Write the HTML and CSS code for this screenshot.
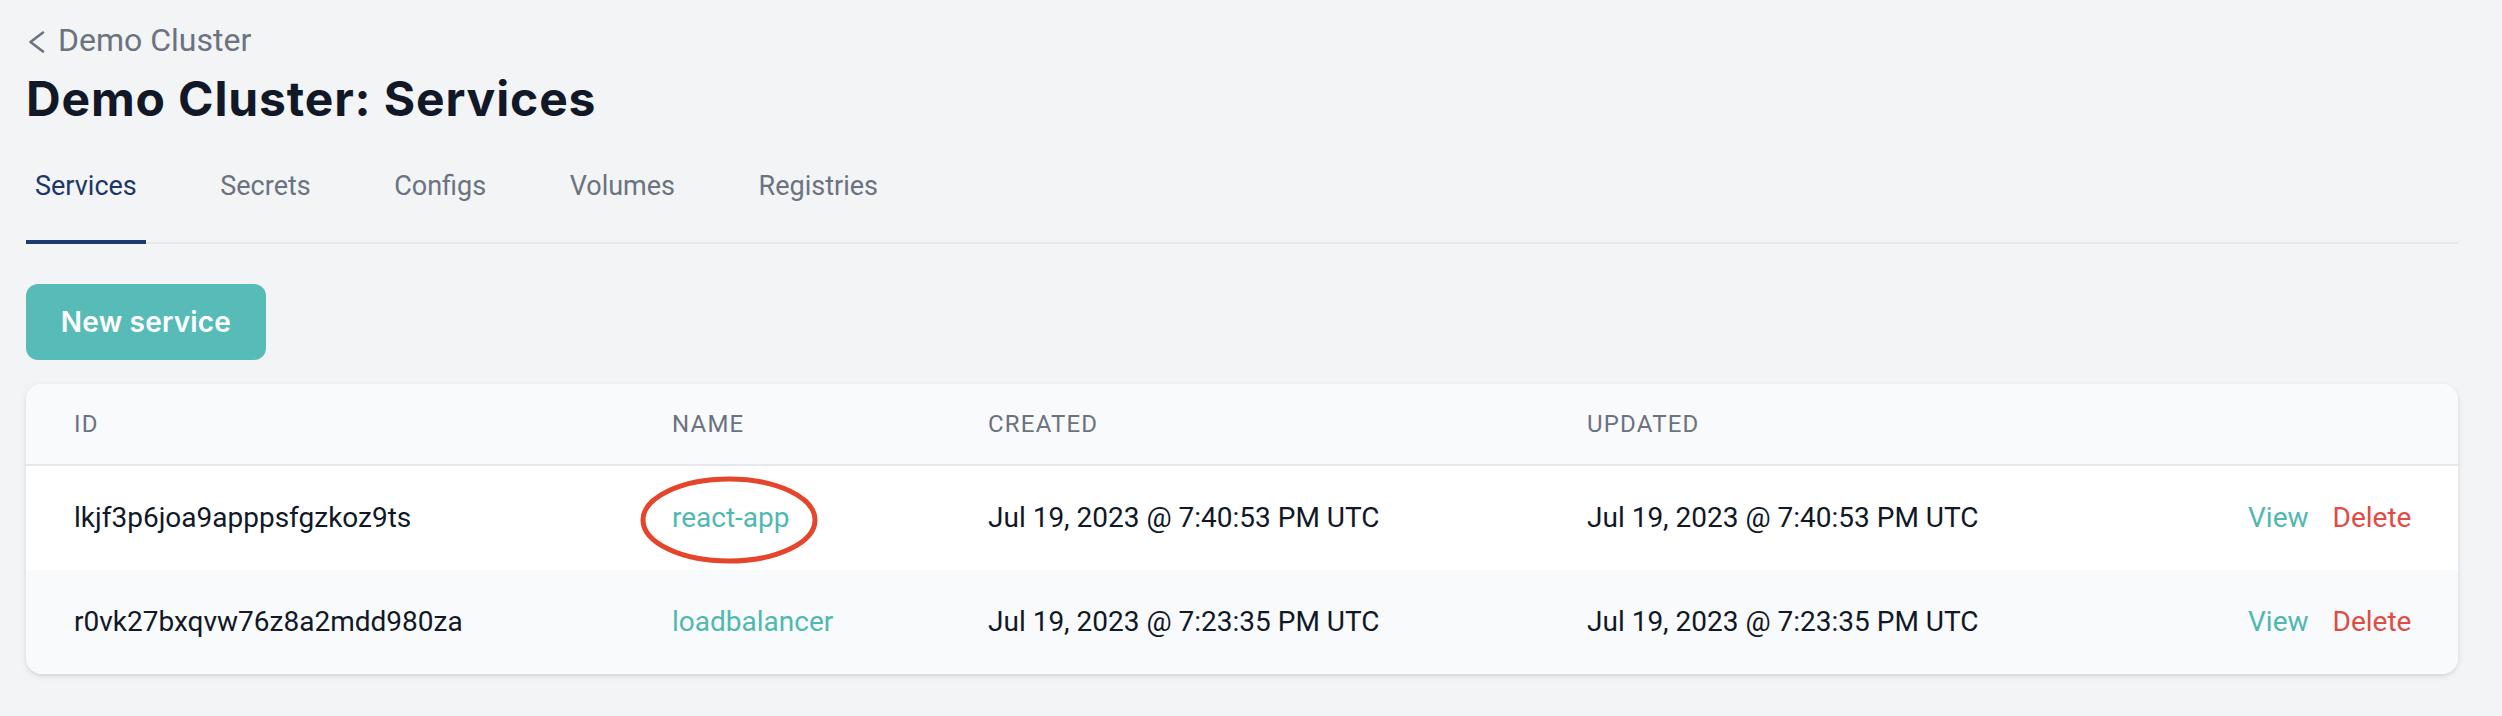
FILE: index.html
```html
<!DOCTYPE html>
<html lang="en">
<head>
<meta charset="utf-8">
<title>Demo Cluster: Services</title>
<link rel="stylesheet" href="styles.css">
</head>
<body>
<div class="page">
  <a class="back" href="#">
    <svg class="back-icon" viewBox="0 0 20 24" width="20" height="24" aria-hidden="true">
      <polyline points="17,2.5 4.5,12 17,21.5" fill="none" stroke="currentColor" stroke-width="2.6" stroke-linecap="round" stroke-linejoin="round"/>
    </svg>
    <span>Demo Cluster</span>
  </a>
  <h1 class="title">Demo Cluster: Services</h1>

  <nav class="tabs">
    <a class="tab active" href="#">Services</a>
    <a class="tab" href="#">Secrets</a>
    <a class="tab" href="#">Configs</a>
    <a class="tab" href="#">Volumes</a>
    <a class="tab" href="#">Registries</a>
  </nav>

  <button class="btn-new" type="button">New service</button>

  <div class="card">
    <div class="row head">
      <div class="cell">ID</div>
      <div class="cell">Name</div>
      <div class="cell">Created</div>
      <div class="cell">Updated</div>
      <div class="cell"></div>
    </div>
    <div class="row odd">
      <div class="cell">lkjf3p6joa9apppsfgzkoz9ts</div>
      <div class="cell"><span class="circled"><a class="link" href="#">react-app</a><svg class="mark" viewBox="0 0 180 88" aria-hidden="true"><ellipse cx="90" cy="44" rx="86" ry="41" fill="none" stroke="#e5452b" stroke-width="5"/></svg></span></div>
      <div class="cell">Jul 19, 2023 @ 7:40:53 PM UTC</div>
      <div class="cell">Jul 19, 2023 @ 7:40:53 PM UTC</div>
      <div class="cell actions"><a class="link" href="#">View</a><a class="danger" href="#">Delete</a></div>
    </div>
    <div class="row even">
      <div class="cell">r0vk27bxqvw76z8a2mdd980za</div>
      <div class="cell"><a class="link" href="#">loadbalancer</a></div>
      <div class="cell">Jul 19, 2023 @ 7:23:35 PM UTC</div>
      <div class="cell">Jul 19, 2023 @ 7:23:35 PM UTC</div>
      <div class="cell actions"><a class="link" href="#">View</a><a class="danger" href="#">Delete</a></div>
    </div>
  </div>
</div>
</body>
</html>
```

FILE: styles.css
```css
* { box-sizing: border-box; }

html, body {
  margin: 0;
  background: #f3f4f6;
}

body {
  font-family: Roboto, "Liberation Sans", sans-serif;
  color: #111827;
  width: 2502px;
  height: 716px;
  overflow: hidden;
}

a { text-decoration: none; }

.page {
  padding: 16px 44px 0 26px;
}

.back {
  display: flex;
  align-items: center;
  height: 48px;
  color: #6b7280;
  font-size: 32px;
  line-height: 48px;
}

.back-icon {
  width: 20px;
  height: 24px;
  margin-right: 12px;
  margin-top: 4px;
}

.title {
  margin: 3px 0 0 0;
  font-family: Inter, "Noto Sans", sans-serif;
  font-weight: 700;
  font-size: 48px;
  line-height: 64px;
  letter-spacing: 0.85px;
  color: #111827;
}

.tabs {
  display: flex;
  gap: 65.5px;
  margin-top: 3px;
  border-bottom: 2px solid #e5e7eb;
}

.tab {
  display: block;
  padding: 32px 9px 34px;
  margin-bottom: -2px;
  border-bottom: 4px solid transparent;
  font-size: 27px;
  line-height: 40px;
  color: #6b7280;
}

.tab.active {
  color: #1c3767;
  border-bottom-color: #1e3a6e;
}

.btn-new {
  display: block;
  margin-top: 40px;
  width: 240px;
  height: 76px;
  padding: 0;
  border: 0;
  border-radius: 12px;
  background: #57bbb8;
  color: #ffffff;
  font-family: Inter, "Noto Sans", sans-serif;
  font-weight: 600;
  font-size: 28px;
  letter-spacing: 0.2px;
}

.card {
  margin-top: 24px;
  background: #ffffff;
  border-radius: 16px;
  overflow: hidden;
  box-shadow: 0 2px 6px 0 rgba(0, 0, 0, 0.10), 0 2px 4px -2px rgba(0, 0, 0, 0.10);
}

.row {
  display: grid;
  grid-template-columns: 598px 316px 599px 661px 1fr;
  align-items: center;
}

.cell {
  padding: 0 48px;
  font-size: 28px;
  line-height: 40px;
  white-space: nowrap;
}

.row.head {
  height: 82px;
  background: #f9fafb;
  border-bottom: 2px solid #e5e7eb;
}

.row.head .cell {
  font-size: 24px;
  line-height: 32px;
  text-transform: uppercase;
  letter-spacing: 0.05em;
  color: #6b7280;
}

.row.odd,
.row.even {
  height: 104px;
}

.row.odd { background: #ffffff; }
.row.even { background: #f9fafb; }

.link { color: #4fb8b1; }
.danger { color: #e04b43; }

.actions {
  display: flex;
  justify-content: flex-end;
  gap: 24px;
}

.circled {
  position: relative;
  display: inline-block;
}

.mark {
  position: absolute;
  left: -33px;
  top: -22px;
  width: 180px;
  height: 88px;
  pointer-events: none;
}
```
